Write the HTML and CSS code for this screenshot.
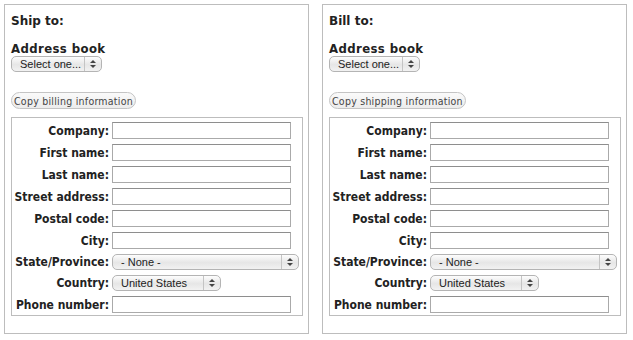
FILE: index.html
```html
<!DOCTYPE html>
<html lang="en">
<head>
    <meta charset="UTF-8">
    <title>Checkout addresses</title>
    <link rel="stylesheet" href="styles.css">
</head>
<body>
    <div class="panes">
        <div class="pane">
            <div class="pane-title">Ship to:</div>
            <div class="book-title">Address book</div>
            <div class="mac-select book-select"><span>Select one...</span><i class="arrows"></i></div>
            <button class="copy-btn" type="button">Copy billing information</button>
            <div class="address-form">
                <label>Company:</label><input type="text">
                <label>First name:</label><input type="text">
                <label>Last name:</label><input type="text">
                <label>Street address:</label><input type="text">
                <label>Postal code:</label><input type="text">
                <label>City:</label><input type="text">
                <label>State/Province:</label><div class="mac-select state-select"><span>- None -</span><i class="arrows"></i></div>
                <label>Country:</label><div class="mac-select country-select"><span>United States</span><i class="arrows"></i></div>
                <label>Phone number:</label><input type="text">
            </div>
        </div>
        <div class="pane">
            <div class="pane-title">Bill to:</div>
            <div class="book-title">Address book</div>
            <div class="mac-select book-select"><span>Select one...</span><i class="arrows"></i></div>
            <button class="copy-btn" type="button">Copy shipping information</button>
            <div class="address-form">
                <label>Company:</label><input type="text">
                <label>First name:</label><input type="text">
                <label>Last name:</label><input type="text">
                <label>Street address:</label><input type="text">
                <label>Postal code:</label><input type="text">
                <label>City:</label><input type="text">
                <label>State/Province:</label><div class="mac-select state-select"><span>- None -</span><i class="arrows"></i></div>
                <label>Country:</label><div class="mac-select country-select"><span>United States</span><i class="arrows"></i></div>
                <label>Phone number:</label><input type="text">
            </div>
        </div>
    </div>
</body>
</html>
```

FILE: styles.css
```css
body {
    margin: 4px;
    font-family: 'DejaVu Sans', sans-serif;
    color: #222;
    background: #fff;
}

.panes {
    display: flex;
    gap: 13px;
}

.pane {
    width: 292px;
    height: 328px;
    border: 1px solid #bdbdbd;
    padding: 0 5px 0 6px;
}

.pane-title {
    font-weight: bold;
    font-size: 12px;
    margin-top: 9px;
    height: 15px;
}

.book-title {
    font-family: 'DejaVu Sans Condensed', 'DejaVu Sans', sans-serif;
    font-weight: bold;
    font-size: 13px;
    letter-spacing: 0.4px;
    margin-top: 13px;
    height: 13px;
    line-height: 13px;
}

.mac-select {
    display: flex;
    align-items: center;
    height: 15px;
    border: 1px solid #b4b4b4;
    border-radius: 5px;
    background: linear-gradient(#fdfdfd, #e6e6e6 55%, #f2f2f2);
    font-family: 'Liberation Sans', sans-serif;
    font-size: 11px;
    color: #222;
    box-sizing: border-box;
}

.mac-select span {
    flex: 1;
    padding-left: 8px;
}

.mac-select .arrows {
    width: 16px;
    height: 100%;
    border-left: 1px solid #c4c4c4;
    position: relative;
}

.mac-select .arrows::before,
.mac-select .arrows::after {
    content: "";
    position: absolute;
    left: 5px;
    border-left: 3px solid transparent;
    border-right: 3px solid transparent;
}

.mac-select .arrows::before {
    top: 3px;
    border-bottom: 3px solid #444;
}

.mac-select .arrows::after {
    bottom: 3px;
    border-top: 3px solid #444;
}

.book-select {
    width: 91px;
    height: 16px;
    margin-top: 1px;
}

.copy-btn {
    display: block;
    margin-top: 20px;
    height: 17px;
    padding: 0 2px;
    border: 1px solid #c4c4c4;
    border-radius: 9px;
    background: linear-gradient(#fafafa, #ececec);
    font-family: 'DejaVu Sans Condensed', 'DejaVu Sans', sans-serif;
    font-size: 10.5px;
    letter-spacing: 0.25px;
    color: #444;
}

.address-form {
    margin-top: 8px;
    border: 1px solid #bdbdbd;
    display: grid;
    grid-template-columns: 97px 1fr;
    column-gap: 3px;
    row-gap: 5px;
    padding: 4px 0 2px;
    align-items: center;
}

.address-form label {
    text-align: right;
    white-space: nowrap;
    font-family: 'DejaVu Sans Condensed', 'DejaVu Sans', sans-serif;
    font-weight: bold;
    font-size: 12px;
}

.address-form input {
    width: 179px;
    height: 17px;
    margin: 0;
    padding: 0;
    border: 1px solid #aaa;
    border-top-color: #8e8e8e;
    box-sizing: border-box;
}

.state-select {
    width: 187px;
    height: 16px;
}

.country-select {
    width: 109px;
    height: 16px;
}
```
